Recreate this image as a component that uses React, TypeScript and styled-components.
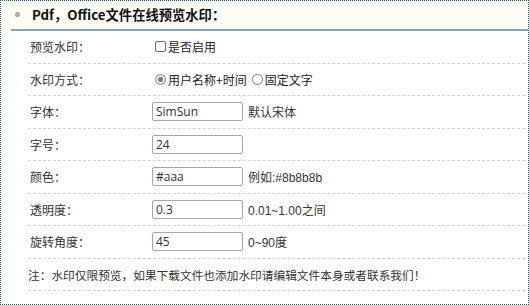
import React from "react";
import styled, { createGlobalStyle } from "styled-components";

const Global = createGlobalStyle`
  html, body { margin: 0; padding: 0; background: #fff; }
  body {
    font-family: "Liberation Sans", "Noto Sans CJK SC", sans-serif;
    font-size: 12px;
    color: #333;
  }
`;

const Panel = styled.div`
  box-sizing: border-box;
  width: 529px;
  height: 305px;
  border: 1px dotted #2b5564;
  display: flex;
  flex-direction: column;
  background: #fff;
`;

const Header = styled.div`
  background: #fdfdf6;
  padding-left: 10px;
`;

const HeaderBar = styled.div`
  height: 28px;
  border-bottom: 2px solid #8fa4af;
  display: flex;
  align-items: center;
  padding-left: 4px;
  gap: 12px;
`;

const Bullet = styled.span`
  width: 5px;
  height: 5px;
  border-radius: 50%;
  background: #a9a9a9;
  margin-top: -1px;
`;

const Title = styled.h2`
  margin: 0;
  font-family: "Noto Sans CJK SC", sans-serif;
  font-weight: 700;
  font-size: 13.3px;
  color: #111;
  line-height: 1;
`;

const Form = styled.div`
  margin: 0 3px 0 27px;
  display: flex;
  flex-direction: column;
`;

const Row = styled.div`
  box-sizing: border-box;
  height: 32.5px;
  border-bottom: 1px dashed #d2d2d2;
  display: grid;
  grid-template-columns: 124px 1fr;
  align-items: center;
`;

const NoteRow = styled.div`
  box-sizing: border-box;
  height: 32.5px;
  border-bottom: 1px dashed #d2d2d2;
  display: flex;
  align-items: center;
  font-family: "Noto Sans CJK SC", sans-serif;
  font-size: 11.7px;
  color: #333;
`;

const Label = styled.div`
  padding-left: 2px;
  font-family: "Noto Sans CJK SC", sans-serif;
  color: #333;
`;

const Value = styled.div<{ $inset?: boolean }>`
  display: flex;
  align-items: center;
  padding-left: ${(p) => (p.$inset ? "3px" : "0")};
`;

const Option = styled.label`
  display: inline-flex;
  align-items: center;
  gap: 2px;
  margin-right: 5px;
  font-family: "Noto Sans CJK SC", sans-serif;
  color: #222;
`;

const CheckBox = styled.span`
  box-sizing: border-box;
  width: 11px;
  height: 11px;
  border: 1px solid #6b6b6b;
  border-radius: 2px;
  background: #fff;
`;

const Radio = styled.span<{ $checked?: boolean }>`
  box-sizing: border-box;
  width: 11px;
  height: 11px;
  border-radius: 50%;
  border: 1px solid ${(p) => (p.$checked ? "#8a8a8a" : "#7a7a7a")};
  background: ${(p) => (p.$checked ? "#e6e6e6" : "#fff")};
  display: inline-flex;
  align-items: center;
  justify-content: center;
  &::after {
    content: "";
    width: 5px;
    height: 5px;
    border-radius: 50%;
    background: ${(p) => (p.$checked ? "#7b7b7b" : "transparent")};
  }
`;

const Input = styled.input`
  box-sizing: border-box;
  width: 91px;
  height: 19px;
  border: 1px solid #a6a6a6;
  border-radius: 2px;
  padding: 0 3px;
  margin: 0 5px 0 0;
  font-family: "Open Sans", "Noto Sans CJK SC", sans-serif;
  font-size: 12px;
  color: #333;
  background: #fff;
  outline: none;
`;

const Hint = styled.span`
  font-family: "Liberation Sans", "Noto Sans CJK SC", sans-serif;
  color: #333;
`;

const fields: { label: string; value: string; hint?: string }[] = [
  { label: "字体：", value: "SimSun", hint: "默认宋体" },
  { label: "字号：", value: "24" },
  { label: "颜色：", value: "#aaa", hint: "例如:#8b8b8b" },
  { label: "透明度：", value: "0.3", hint: "0.01~1.00之间" },
  { label: "旋转角度：", value: "45", hint: "0~90度" },
];

export default function App() {
  return (
    <>
      <Global />
      <Panel>
        <Header>
          <HeaderBar>
            <Bullet />
            <Title>Pdf，Office文件在线预览水印：</Title>
          </HeaderBar>
        </Header>
        <Form>
          <Row>
            <Label>预览水印：</Label>
            <Value $inset>
              <Option>
                <CheckBox />
                是否启用
              </Option>
            </Value>
          </Row>
          <Row>
            <Label>水印方式：</Label>
            <Value $inset>
              <Option>
                <Radio $checked />
                用户名称+时间
              </Option>
              <Option>
                <Radio />
                固定文字
              </Option>
            </Value>
          </Row>
          {fields.map((f) => (
            <Row key={f.label}>
              <Label>{f.label}</Label>
              <Value>
                <Input defaultValue={f.value} />
                {f.hint && <Hint>{f.hint}</Hint>}
              </Value>
            </Row>
          ))}
          <NoteRow>注：水印仅限预览，如果下载文件也添加水印请编辑文件本身或者联系我们！</NoteRow>
        </Form>
      </Panel>
    </>
  );
}
